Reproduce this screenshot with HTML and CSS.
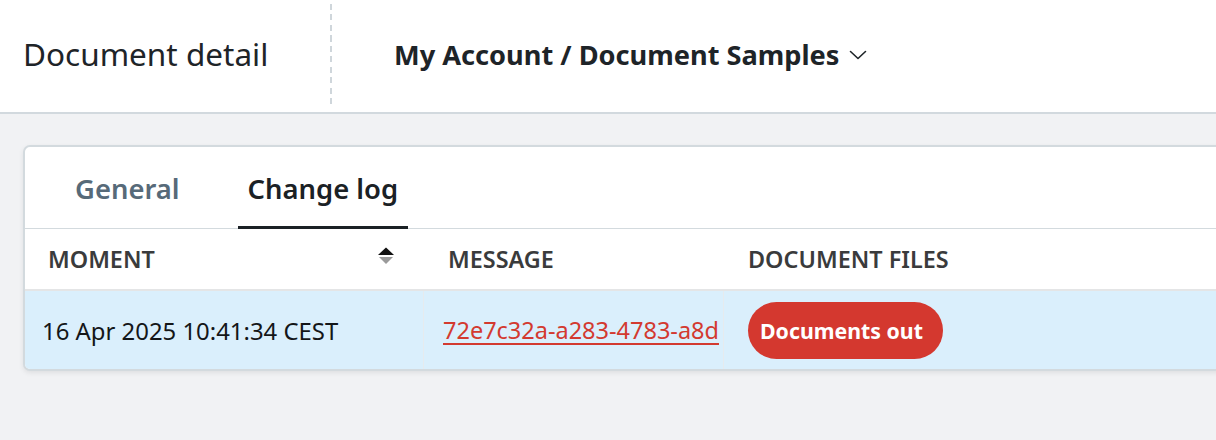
FILE: index.html
```html
<!DOCTYPE html>
<html lang="en">
<head>
<meta charset="utf-8">
<title>Document detail</title>
<link rel="stylesheet" href="styles.css">
</head>
<body>
<header class="topbar">
  <div class="title-block">
    <h1 class="page-title">Document detail</h1>
  </div>
  <div class="divider"></div>
  <div class="breadcrumb">
    <span class="crumb-text">My Account / Document Samples</span>
    <svg class="chevron" width="18" height="12" viewBox="0 0 18 12" aria-hidden="true"><path d="M1.5 2.5 L9 9.5 L16.5 2.5" fill="none" stroke="#1e2428" stroke-width="1.6" stroke-linecap="round" stroke-linejoin="round"/></svg>
  </div>
</header>
<main class="content">
  <section class="card">
    <nav class="tabs">
      <div class="tab">General</div>
      <div class="tab active">Change log</div>
    </nav>
    <div class="table">
      <div class="th th-sort">
        <span>MOMENT</span>
        <svg class="sort" width="18" height="20" viewBox="0 0 18 20" aria-hidden="true">
          <path d="M1 9 L9 1.5 L17 9 Z" fill="#111"/>
          <path d="M2 11 L9 18 L16 11 Z" fill="#9a9a9a"/>
        </svg>
      </div>
      <div class="th">MESSAGE</div>
      <div class="th">DOCUMENT FILES</div>
      <div class="td td-first">16 Apr 2025 10:41:34 CEST</div>
      <div class="td td-sep td-clip"><a class="msg-link" href="#">72e7c32a-a283-4783-a8d</a></div>
      <div class="td td-sep"><span class="badge">Documents out</span></div>
    </div>
  </section>
</main>
</body>
</html>
```

FILE: styles.css
```css
html, body {
  margin: 0;
  padding: 0;
  overflow: hidden;
}
body {
  background: #f1f2f4;
  font-family: "Noto Sans", "Open Sans", "DejaVu Sans", sans-serif;
  color: #1e2428;
  height: 440px;
}
.topbar {
  display: flex;
  align-items: stretch;
  height: 112px;
  background: #ffffff;
  border-bottom: 2px solid #d2d9de;
}
.title-block {
  width: 307px;
  padding-left: 23px;
  display: flex;
  align-items: center;
  padding-bottom: 6px;
}
.page-title {
  margin: 0;
  font-size: 31.5px;
  font-weight: 400;
  color: #1e2428;
}
.divider {
  width: 2px;
  margin: 4px 0 8px;
  background: repeating-linear-gradient(to bottom, #cfd6db 0 6px, transparent 6px 10.5px);
}
.breadcrumb {
  display: flex;
  align-items: center;
  padding-left: 62px;
  padding-bottom: 4px;
  gap: 10px;
}
.crumb-text {
  font-size: 27.2px;
  font-weight: 700;
  color: #1e2428;
}
.chevron {
  margin-top: 2px;
}
.content {
  padding: 31px 0 0 23px;
}
.card {
  width: 1210px;
  background: #ffffff;
  border: 2px solid #d3dade;
  border-radius: 7px;
  box-shadow: 0 2px 5px rgba(0, 0, 0, 0.08);
  overflow: hidden;
}
.tabs {
  display: flex;
  gap: 48px;
  padding-left: 40px;
  height: 81px;
  border-bottom: 1px solid #d3dade;
}
.tab {
  display: flex;
  align-items: center;
  padding: 0 10px;
  font-size: 27.4px;
  font-weight: 600;
  color: #576a79;
  border-bottom: 3px solid transparent;
  margin-bottom: -1px;
  padding-top: 3px;
}
.tab.active {
  color: #1b2125;
  border-bottom-color: #1b2125;
}
.table {
  display: grid;
  grid-template-columns: 398px 300px 1fr;
}
.th {
  height: 60px;
  display: flex;
  align-items: center;
  padding-left: 25px;
  font-size: 23.4px;
  font-weight: 600;
  color: #3a3b3c;
  border-bottom: 2px solid #e4e5e6;
}
.th-sort {
  justify-content: space-between;
  padding-left: 23px;
  padding-right: 28px;
}
.sort {
  margin-top: -6px;
}
.td {
  height: 78px;
  display: flex;
  align-items: center;
  padding-left: 20px;
  background: #daeffc;
  font-size: 23.9px;
  color: #141618;
  white-space: nowrap;
}
.td-first {
  padding-left: 17px;
}
.td-sep {
  border-left: 1px solid #e6ebee;
}
.td-clip {
  overflow: hidden;
  padding-left: 19px;
}
.msg-link {
  color: #d33a30;
  font-size: 23.5px;
  text-decoration: underline;
  text-underline-offset: 4px;
  text-decoration-thickness: 2px;
}
.badge {
  display: inline-flex;
  align-items: center;
  height: 57px;
  padding: 0 20px 0 12px;
  margin-left: 4px;
  border-radius: 29px;
  background: #d4382f;
  color: #ffffff;
  font-size: 21.3px;
  font-weight: 700;
}
```
